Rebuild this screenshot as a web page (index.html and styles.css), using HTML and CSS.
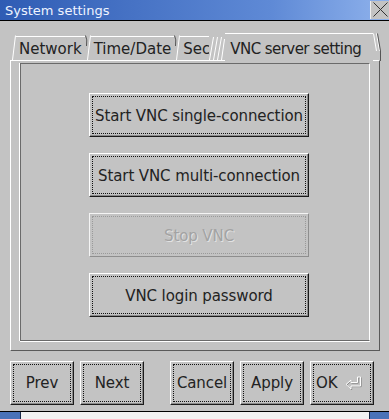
FILE: index.html
```html
<!DOCTYPE html>
<html>
    <head>
        <meta charset="UTF-8">
        <meta name="viewport" content="width=device-width, initial-scale=1.0">
        <title>System settings</title>
        <link rel="stylesheet" href="styles.css">
    </head>
    <body>
        <div class="window">
            <div class="titlebar">
                <span class="title">System settings</span>
                <span class="close">
                    <svg width="17" height="17" viewBox="0 0 17 17">
                        <path d="M1.5 1.5 L15.5 15.5 M15.5 1.5 L1.5 15.5" stroke="#333" stroke-width="1" fill="none"/>
                    </svg>
                </span>
            </div>

            <div class="tabbar">
                <svg class="slant" width="4" height="25" viewBox="0 0 4 25">
                    <path d="M0.5 25 L3.5 0.5" stroke="#fff" fill="none"/>
                </svg>
                <div class="tab">Network</div>
                <svg class="slant" width="6" height="25" viewBox="0 0 6 25">
                    <path d="M0.5 0.5 Q2.5 4 1.5 11" stroke="#555" fill="none"/>
                    <path d="M2.5 25 L5.5 0.5" stroke="#fff" fill="none"/>
                </svg>
                <div class="tab">Time/Date</div>
                <svg class="slant" width="6" height="25" viewBox="0 0 6 25">
                    <path d="M0.5 0.5 Q2.5 4 1.5 11" stroke="#555" fill="none"/>
                    <path d="M2.5 25 L5.5 0.5" stroke="#fff" fill="none"/>
                </svg>
                <div class="tab tab-cut">Sec</div>
                <svg class="slant hatch" width="16" height="25" viewBox="0 0 16 25">
                    <path d="M0.5 25 L4.5 2 M4.5 25 L8.5 2 M8.5 25 L12.5 2 M12.5 25 L15.5 4" stroke="#fff" fill="none"/>
                </svg>
                <div class="tab active">VNC server setting</div>
                <svg class="slant tail" width="9" height="28" viewBox="0 0 9 28">
                    <path d="M0.5 0.5 L3.5 18 M3.5 0.5 L6.5 18" stroke="#fff" fill="none"/>
                    <path d="M4.5 0.5 L7.5 18 L7.5 28" stroke="#555" fill="none"/>
                </svg>
            </div>

            <div class="panel">
                <div class="page">
                    <div class="actions">
                        <button class="btn big">Start VNC single-connection</button>
                        <button class="btn big">Start VNC multi-connection</button>
                        <button class="btn big" disabled>Stop VNC</button>
                        <button class="btn big">VNC login password</button>
                    </div>
                </div>
            </div>

            <div class="footer">
                <button class="btn small">Prev</button>
                <button class="btn small">Next</button>
                <button class="btn small push">Cancel</button>
                <button class="btn small">Apply</button>
                <button class="btn small ok">OK
                    <svg width="17" height="14" viewBox="0 0 17 14">
                        <path d="M1 8.5 L6 4 L6 6.5 L12.5 6.5 L12.5 1 L15.5 1 L15.5 10 L6 10 L6 13 Z" fill="none" stroke="#888" stroke-width="1" transform="translate(0.7 0.7)"/>
                        <path d="M1 8.5 L6 4 L6 6.5 L12.5 6.5 L12.5 1 L15.5 1 L15.5 10 L6 10 L6 13 Z" fill="none" stroke="#fff" stroke-width="1"/>
                    </svg>
                </button>
            </div>

            <div class="taskbar">
                <span class="task-left"></span>
                <span class="task-right"></span>
            </div>
        </div>
    </body>
</html>
```

FILE: styles.css
```css
body{
    margin: 0;
    font-family: 'DejaVu Sans', 'Liberation Sans', sans-serif;
}
.window{
    width: 389px;
    height: 419px;
    background-color: #c3c3c3;
    display: flex;
    flex-direction: column;
    overflow: hidden;
}
.titlebar{
    height: 20px;
    display: flex;
    align-items: center;
    justify-content: space-between;
    background: linear-gradient(to right, #2f5cb4, #5f8ad6 70%, #8fb2ec);
    border-bottom: 1px solid #000;
}
.title{
    color: #eef3ff;
    font-size: 13px;
    padding-left: 5px;
    padding-top: 1px;
}
.close{
    width: 18px;
    height: 18px;
    display: flex;
    align-items: center;
    justify-content: center;
    background-color: #c3c3c3;
    border-left: 1px solid #eee;
}

/* tabs */
.tabbar{
    height: 39px;
    display: flex;
    align-items: flex-end;
    padding-left: 12px;
    position: relative;
    z-index: 1;
}
.slant{
    display: block;
    flex: none;
}
.tab{
    flex: none;
    height: 24px;
    border-top: 1px solid #fff;
    font-size: 15px;
    line-height: 18px;
    padding: 3px 3px 0 3px;
    box-sizing: border-box;
    color: #222;
    white-space: nowrap;
}
.tab-cut{
    padding-right: 0;
    width: 29px;
    overflow: hidden;
}
.tab.active{
    height: 28px;
    width: 148px;
    padding: 6px 0 0 5px;
    margin-bottom: -1px;
    letter-spacing: -0.55px;
    background-color: #c3c3c3;
}
.tail{
    margin-bottom: -1px;
}

/* panel */
.panel{
    height: 293px;
    box-sizing: border-box;
    margin-left: 10px;
    width: 370px;
    border-top: 1px solid #fff;
    border-left: 1px solid #fff;
    border-right: 1px solid #5a5a5a;
    border-bottom: 1px solid #5a5a5a;
    padding: 2px 9px 9px 9px;
}
.page{
    height: 100%;
    box-sizing: border-box;
    border-top: 1px solid #6a6a6a;
    border-left: 1px solid #6a6a6a;
    border-bottom: 1px solid #6a6a6a;
    border-right: 1px solid #fff;
    box-shadow: -1px 0 0 #fff, 0 1px 0 #fff;
}
.actions{
    display: flex;
    flex-direction: column;
    gap: 16px;
    padding: 29px 0 0 68px;
}

/* buttons */
.btn{
    font-family: 'DejaVu Sans', 'Liberation Sans', sans-serif;
    font-size: 15px;
    letter-spacing: -0.1px;
    color: #222;
    background-color: #c3c3c3;
    border: 1px solid;
    border-color: #fff #1a1a1a #1a1a1a #fff;
    box-shadow: inset -1px -1px 0 #8a8a8a;
    outline: 1px dotted #111;
    outline-offset: -4px;
    padding: 0;
    margin: 0;
}
.btn.big{
    width: 220px;
    height: 44px;
    padding-top: 3px;
}
.btn:disabled{
    color: #a3a3a3;
    border-color: #f4f4f4 #8e8e8e #8e8e8e #f4f4f4;
    box-shadow: none;
    outline-color: #999;
    text-shadow: 1px 1px 0 #e2e2e2;
}
.footer{
    display: flex;
    gap: 6px;
    padding: 10px 0 0 10px;
}
.btn.small{
    width: 64px;
    height: 44px;
}
.btn.push{
    margin-left: 20px;
}
.btn.ok{
    display: flex;
    align-items: center;
    gap: 8px;
    padding-left: 5px;
}
.taskbar{
    margin-top: 6px;
    height: 7px;
    border-top: 1px solid #000;
    background-color: #f2f2f2;
    display: flex;
    justify-content: space-between;
}
.task-left{
    width: 20px;
    background-color: #4a72b8;
    border-right: 1px solid #1a2a4a;
}
.task-right{
    width: 19px;
    background-color: #4a72b8;
    border-left: 1px solid #1a2a4a;
}
```
